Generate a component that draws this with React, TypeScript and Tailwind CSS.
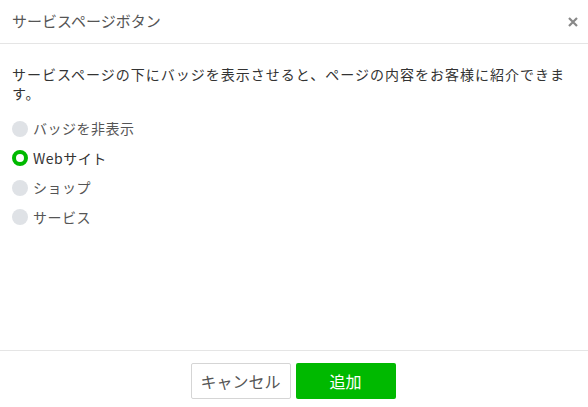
export default function App() {
  const options = [
    { label: 'バッジを非表示', checked: false },
    { label: 'Webサイト', checked: true },
    { label: 'ショップ', checked: false },
    { label: 'サービス', checked: false },
  ]

  return (
    <div
      className="w-[588px] h-[407px] bg-white flex flex-col text-[#333]"
      style={{ fontFamily: '"Noto Sans CJK JP", "Noto Sans", sans-serif' }}
    >
      {/* Header */}
      <div className="h-[44px] shrink-0 border-b border-[#e5e5e5] flex items-center justify-between pl-3 pr-[10px]">
        <h1 className="text-[15px] text-[#555] font-normal">サービスページボタン</h1>
        <svg className="w-[10px] h-[10px]" viewBox="0 0 10 10" fill="none">
          <path d="M1 1l8 8M9 1l-8 8" stroke="#888" strokeWidth={2.2} />
        </svg>
      </div>

      {/* Body */}
      <div className="flex-1 px-3 pt-[21px]">
        <p className="text-[14px] leading-[19px] tracking-[1px] text-[#333]">
          サービスページの下にバッジを表示させると、ページの内容をお客様に紹介できます。
        </p>
        <div className="mt-[11px] flex flex-col">
          {options.map((o) => (
            <label key={o.label} className="h-[29.5px] flex items-center gap-[5px] text-[14px] tracking-[0.5px]">
              {o.checked ? (
                <span className="w-[16px] h-[16px] rounded-full border-[4.5px] border-[#00b900] bg-white" />
              ) : (
                <span className="w-[16px] h-[16px] rounded-full bg-[#dfe2e6]" />
              )}
              <span className={o.checked ? 'text-[#333]' : 'text-[#555]'}>{o.label}</span>
            </label>
          ))}
        </div>
      </div>

      {/* Footer */}
      <div className="h-[57px] shrink-0 border-t border-[#e5e5e5] flex justify-center gap-[5px] pt-[12px] pr-[2px]">
        <button className="w-[100px] h-[36px] border border-[#d5d5d5] rounded-[2px] bg-white text-[16px] text-[#555]">
          キャンセル
        </button>
        <button className="w-[100px] h-[36px] rounded-[2px] bg-[#00b900] text-[16px] text-white">
          追加
        </button>
      </div>
    </div>
  )
}
